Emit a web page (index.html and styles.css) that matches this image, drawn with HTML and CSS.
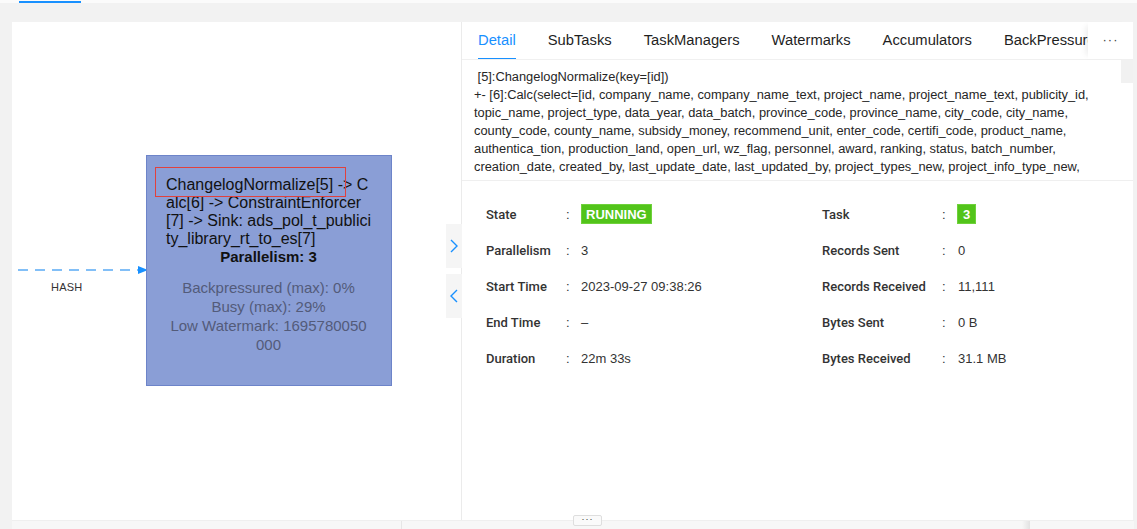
FILE: index.html
```html
<!DOCTYPE html>
<html lang="en">
<head>
<meta charset="utf-8">
<title>Job Vertex Detail</title>
<link rel="stylesheet" href="styles.css">
</head>
<body>
<div class="topnav"><span class="topnav-ink"></span></div>
<main class="main">
  <section class="graph">
    <svg class="edge" width="136" height="12" viewBox="0 0 136 12">
      <line x1="0" y1="6" x2="122" y2="6" stroke="#5aaaf5" stroke-width="1.6" stroke-dasharray="10 7"/>
      <polygon points="120,2 130,6 120,10" fill="#1890ff"/>
    </svg>
    <span class="edge-label">HASH</span>
    <div class="node">
      <div class="node-title">ChangelogNormalize[5] -&gt; C<br>alc[6] -&gt; ConstraintEnforcer<br>[7] -&gt; Sink: ads_pol_t_publici<br>ty_library_rt_to_es[7]</div>
      <div class="node-par">Parallelism: 3</div>
      <div class="node-metrics">Backpressured (max): 0%<br>Busy (max): 29%<br>Low Watermark: 1695780050<br>000</div>
    </div>
    <div class="highlight"></div>
    <button class="collapse collapse-a"><svg width="8" height="14" viewBox="0 0 8 14"><polyline points="1,1 7,7 1,13" fill="none" stroke="#1890ff" stroke-width="1.4"/></svg></button>
    <button class="collapse collapse-b"><svg width="8" height="14" viewBox="0 0 8 14"><polyline points="7,1 1,7 7,13" fill="none" stroke="#1890ff" stroke-width="1.4"/></svg></button>
  </section>
  <section class="detail">
    <div class="tabs">
      <div class="tab-list">
        <span class="tab active">Detail</span>
        <span class="tab">SubTasks</span>
        <span class="tab">TaskManagers</span>
        <span class="tab">Watermarks</span>
        <span class="tab">Accumulators</span>
        <span class="tab">BackPressure</span>
        <span class="tab">FlameGraph</span>
      </div>
      <div class="tab-more">···</div>
    </div>
    <div class="code">
<pre class="code-text"> [5]:ChangelogNormalize(key=[id])
+- [6]:Calc(select=[id, company_name, company_name_text, project_name, project_name_text, publicity_id,
topic_name, project_type, data_year, data_batch, province_code, province_name, city_code, city_name,
county_code, county_name, subsidy_money, recommend_unit, enter_code, certifi_code, product_name,
authentica_tion, production_land, open_url, wz_flag, personnel, award, ranking, status, batch_number,
creation_date, created_by, last_update_date, last_updated_by, project_types_new, project_info_type_new,</pre>
      <div class="scroll-thumb"></div>
    </div>
    <div class="desc">
      <div class="item"><span class="label">State</span><span class="colon">:</span><span class="value"><span class="badge">RUNNING</span></span></div>
      <div class="item item-r"><span class="label">Task</span><span class="colon">:</span><span class="value"><span class="badge badge-num">3</span></span></div>
      <div class="item"><span class="label">Parallelism</span><span class="colon">:</span><span class="value">3</span></div>
      <div class="item item-r"><span class="label">Records Sent</span><span class="colon">:</span><span class="value">0</span></div>
      <div class="item"><span class="label">Start Time</span><span class="colon">:</span><span class="value">2023-09-27 09:38:26</span></div>
      <div class="item item-r"><span class="label">Records Received</span><span class="colon">:</span><span class="value">11,111</span></div>
      <div class="item"><span class="label">End Time</span><span class="colon">:</span><span class="value">–</span></div>
      <div class="item item-r"><span class="label">Bytes Sent</span><span class="colon">:</span><span class="value">0 B</span></div>
      <div class="item"><span class="label">Duration</span><span class="colon">:</span><span class="value">22m 33s</span></div>
      <div class="item item-r"><span class="label">Bytes Received</span><span class="colon">:</span><span class="value">31.1 MB</span></div>
    </div>
  </section>
</main>
<footer class="footer">
  <div class="footer-left"></div>
  <div class="footer-right"><span class="footer-shade"></span></div>
  <span class="handle">···</span>
</footer>
</body>
</html>
```
FILE: styles.css
```css
* { box-sizing: border-box; }
html, body { margin: 0; padding: 0; }
body {
  background: #f2f2f2;
  font-family: "Liberation Sans", Arial, sans-serif;
  color: #333;
  width: 1137px;
  height: 529px;
  overflow: hidden;
  position: relative;
}
.topnav {
  height: 3px;
  background: #fbfbfb;
  position: relative;
}
.topnav-ink {
  position: absolute;
  left: 19px;
  top: 1px;
  width: 62px;
  height: 2px;
  background: #1890ff;
}
.main {
  display: flex;
  margin: 19px 4px 0 12px;
  height: 498px;
  background: #fff;
}
.graph {
  position: relative;
  width: 450px;
  flex: none;
  border-right: 1px solid #ebebeb;
  background: #fff;
}
.edge {
  position: absolute;
  left: 6px;
  top: 242px;
}
.edge-label {
  position: absolute;
  left: 39px;
  top: 259px;
  font-size: 11px;
  color: #333;
  letter-spacing: 0.2px;
}
.node {
  position: absolute;
  left: 134px;
  top: 133px;
  width: 246px;
  height: 231px;
  background: #8a9ed6;
  border: 1px solid #6d84c9;
  padding: 20px 10px 0 19px;
  font-size: 15px;
}
.node-title {
  font-size: 16px;
  line-height: 18px;
  color: #111;
  white-space: nowrap;
}
.node-par {
  line-height: 18px;
  font-weight: bold;
  color: #111;
  text-align: center;
  padding-right: 10px;
}
.node-metrics {
  margin-top: 12px;
  line-height: 19px;
  color: #535b7a;
  text-align: center;
  padding-right: 10px;
}
.highlight {
  position: absolute;
  left: 143px;
  top: 145px;
  width: 191px;
  height: 30px;
  border: 1px solid #e0413d;
}
.collapse {
  position: absolute;
  left: 434px;
  width: 16px;
  height: 44px;
  padding: 0;
  border: none;
  background: #f5f5f5;
  display: flex;
  align-items: center;
  justify-content: center;
}
.collapse-a { top: 202px; }
.collapse-b { top: 252px; }
.detail {
  flex: 1;
  display: flex;
  flex-direction: column;
  min-width: 0;
}
.tabs {
  display: flex;
  height: 38px;
  border-bottom: 1px solid #f0f0f0;
}
.tab-list {
  flex: 1;
  display: flex;
  overflow: hidden;
  white-space: nowrap;
  padding-left: 16px;
  gap: 32px;
}
.tab {
  font-size: 14.75px;
  color: #1f1f1f;
  line-height: 36px;
  position: relative;
}
.tab.active { color: #1890ff; }
.tab.active::after {
  content: "";
  position: absolute;
  left: 0;
  right: 0;
  bottom: -1px;
  height: 2px;
  background: #1890ff;
}
.tab-more {
  width: 45px;
  flex: none;
  text-align: center;
  line-height: 36px;
  font-size: 13px;
  color: #444;
  letter-spacing: 1px;
  background: #fff;
  box-shadow: -6px 0 6px -4px rgba(0,0,0,0.08);
}
.code {
  position: relative;
  height: 121px;
  overflow: hidden;
  border-bottom: 1px solid #efefef;
  padding: 8px 0 0 12px;
}
.code-text {
  margin: 0;
  font-family: "Liberation Sans", Arial, sans-serif;
  font-size: 12.85px;
  line-height: 18px;
  color: #262626;
  white-space: pre;
}
.scroll-thumb {
  position: absolute;
  right: 0;
  top: 0;
  width: 12px;
  height: 23px;
  background: #f1f1f1;
}
.desc {
  display: grid;
  grid-template-columns: 336px 1fr;
  padding: 15px 0 0 24px;
}
.item {
  display: flex;
  align-items: center;
  height: 36px;
  font-size: 13px;
}
.label {
  width: 80px;
  flex: none;
  font-family: Roboto, "Liberation Sans", sans-serif;
  font-weight: 500;
  color: #333;
}
.item-r .label { width: 120px; }
.colon {
  width: 15px;
  flex: none;
  color: #333;
}
.item-r .colon { width: 16px; }
.value { color: #333; }
.badge {
  display: inline-block;
  height: 20px;
  line-height: 19px;
  padding: 0 4px;
  background: #52c41a;
  border: 1px solid #6fd13b;
  color: #fff;
  font-weight: bold;
  font-size: 13px;
}
.badge-num { padding: 0 5px; margin-left: -1px; }
.footer {
  position: relative;
  display: flex;
  margin-left: 12px;
  margin-right: 3px;
  height: 9px;
  background: #f7f7f7;
  border-top: 1px solid #efefef;
}
.footer-left {
  width: 390px;
  border-right: 1px solid #e6e6e6;
}
.footer-right {
  flex: 1;
  position: relative;
}
.footer-shade {
  position: absolute;
  left: 620px;
  top: 0;
  width: 8px;
  height: 100%;
  background: linear-gradient(to right, #f7f7f7, #e2e2e2);
}
.handle {
  position: absolute;
  left: 561px;
  top: -6px;
  width: 29px;
  height: 11px;
  background: #fafafa;
  border: 1px solid #dedede;
  border-radius: 2px;
  font-size: 9px;
  line-height: 6px;
  text-align: center;
  color: #333;
  letter-spacing: 1px;
}
```
